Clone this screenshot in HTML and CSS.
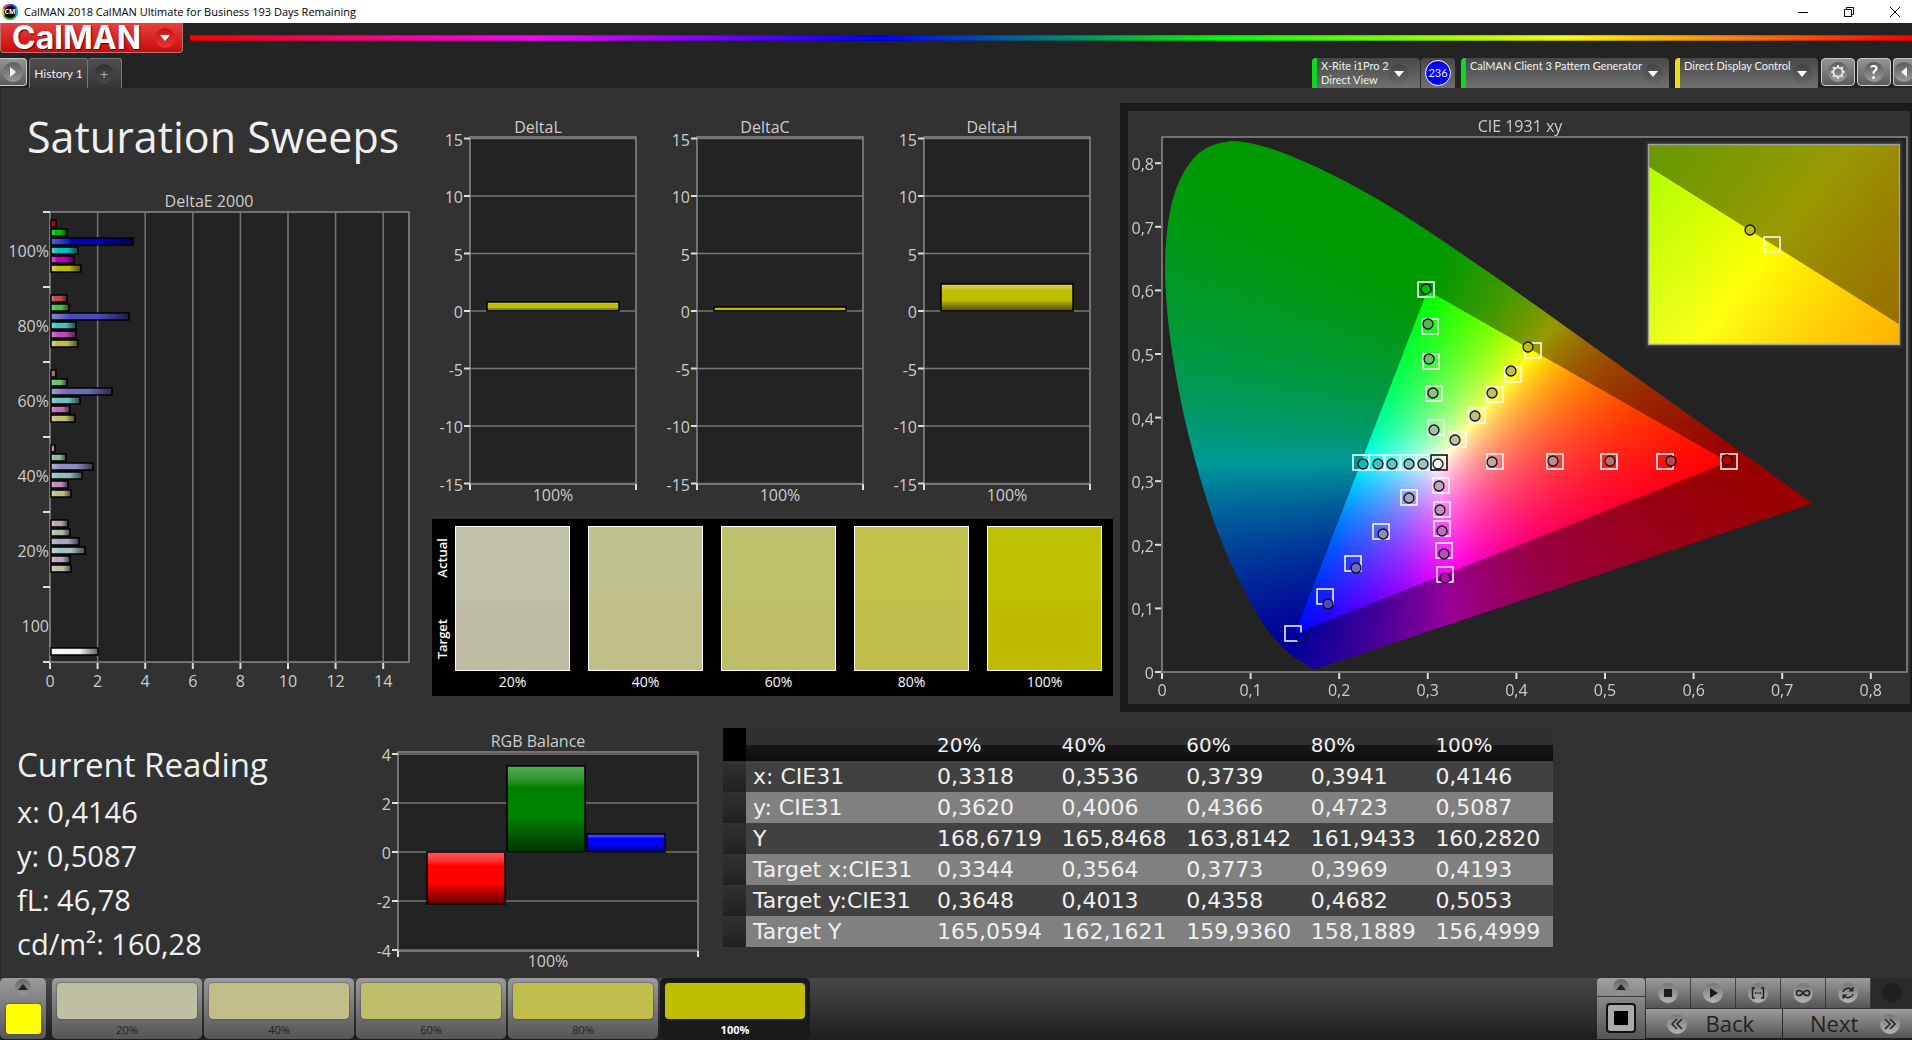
FILE: index.html
```html
<!DOCTYPE html>
<html lang="en">
<head>
<meta charset="utf-8">
<title>CalMAN 2018 CalMAN Ultimate for Business 193 Days Remaining</title>
<link rel="stylesheet" href="styles.css">
</head>
<body>
<header class="titlebar">
  <svg class="app-icon" viewBox="0 0 16 16" aria-hidden="true">
    <circle cx="8" cy="8" r="8" fill="#2a2"/>
    <path d="M8 0a8 8 0 0 1 7 4L8 8z" fill="#1a3cff"/><path d="M15 4a8 8 0 0 1 0 8L8 8z" fill="#20b0e0"/>
    <path d="M1 4a8 8 0 0 1 7-4v8z" fill="#f0208c"/><path d="M1 4a8 8 0 0 0 0 8l7-4z" fill="#e8d020"/>
    <circle cx="8" cy="8" r="6" fill="#000"/>
    <text x="8" y="10" class="app-icon-text">CM</text>
  </svg>
  <span class="titlebar-text">CalMAN 2018 CalMAN Ultimate for Business 193 Days Remaining</span>
  <div class="window-buttons">
    <button class="window-button" aria-label="Minimize"><svg viewBox="0 0 12 12"><path d="M1 6.500h10"/></svg></button>
    <button class="window-button" aria-label="Restore"><svg viewBox="0 0 12 12"><path d="M1.500 3.500h7v7h-7zM3.500 3.500v-2h7v7h-2"/></svg></button>
    <button class="window-button" aria-label="Close"><svg viewBox="0 0 12 12"><path d="M1 1l10 10M11 1L1 11"/></svg></button>
  </div>
</header>

<div class="brand-row">
  <button class="brand"><span>CalMAN</span><span class="knob knob-red"><svg viewBox="0 0 10 6"><path d="M0 0h10L5 6z"/></svg></span></button>
  <div class="spectrum"></div>
</div>

<nav class="toolbar">
  <button class="square-button side-toggle" aria-label="Expand"><span class="knob"><svg viewBox="0 0 6 10"><path d="M0 0v10l6-5z"/></svg></span></button>
  <div class="tabs">
    <button class="tab">History 1</button>
    <button class="tab tab-add" aria-label="Add history"><span class="knob knob-dark">+</span></button>
  </div>
  <div class="devices">
    <div class="device-group">
      <button class="device meter"><span>X-Rite i1Pro 2<br>Direct View</span><span class="knob knob-dark"><svg viewBox="0 0 10 6"><path d="M0 0h10L5 6z"/></svg></span></button>
      <button class="count"><span>236</span></button>
    </div>
    <button class="device source"><span>CalMAN Client 3 Pattern Generator</span><span class="knob knob-dark"><svg viewBox="0 0 10 6"><path d="M0 0h10L5 6z"/></svg></span></button>
    <button class="device display"><span>Direct Display Control</span><span class="knob knob-dark"><svg viewBox="0 0 10 6"><path d="M0 0h10L5 6z"/></svg></span></button>
    <div class="tools">
      <button class="square-button" aria-label="Settings"><span class="knob"><svg class="gear" viewBox="0 0 16 16"><circle cx="8" cy="8" r="4.600"/><path d="M8 1v3M8 12v3M1 8h3M12 8h3M3 3l2 2M11 11l2 2M3 13l2-2M11 5l2-2"/></svg></span></button>
      <button class="square-button" aria-label="Help"><span class="knob help">?</span></button>
      <button class="square-button cut" aria-label="Collapse"><span class="knob"><svg viewBox="0 0 6 10"><path d="M6 0v10L0 5z"/></svg></span></button>
    </div>
  </div>
</nav>

<main class="workspace">
  <div class="upper">
    <section class="sweeps">
      <h1>Saturation Sweeps</h1>
      <svg id="delta-e" class="chart" viewBox="0 0 431 530"></svg>
    </section>
    <section class="deltas">
      <div class="delta-row">
        <svg id="delta-l" class="chart" viewBox="0 0 227 431"></svg>
        <svg id="delta-c" class="chart" viewBox="0 0 227 431"></svg>
        <svg id="delta-h" class="chart" viewBox="0 0 227 431"></svg>
      </div>
      <div class="compare">
        <div class="compare-side"><span>Actual</span><span>Target</span></div>
        <div class="patches">
          <figure><div class="patch s20"></div><figcaption>20%</figcaption></figure>
          <figure><div class="patch s40"></div><figcaption>40%</figcaption></figure>
          <figure><div class="patch s60"></div><figcaption>60%</figcaption></figure>
          <figure><div class="patch s80"></div><figcaption>80%</figcaption></figure>
          <figure><div class="patch s100"></div><figcaption>100%</figcaption></figure>
        </div>
      </div>
    </section>
    <section class="cie">
      <canvas id="cie-canvas" width="782" height="593"></canvas>
      <svg id="cie-axes" viewBox="0 0 782 593"></svg>
    </section>
  </div>

  <div class="lower">
    <section class="reading">
      <h2>Current Reading</h2>
      <p>x: 0,4146</p>
      <p>y: 0,5087</p>
      <p>fL: 46,78</p>
      <p>cd/m²: 160,28</p>
    </section>
    <svg id="rgb" class="chart" viewBox="0 0 353 266"></svg>
    <div class="table-wrap">
      <table>
        <colgroup><col class="col-mark"><col class="col-name"><col><col><col><col><col></colgroup>
        <thead><tr><th class="mark"></th><th></th><th>20%</th><th>40%</th><th>60%</th><th>80%</th><th>100%</th></tr></thead>
        <tbody>
          <tr><td class="mark"></td><td>x: CIE31</td><td>0,3318</td><td>0,3536</td><td>0,3739</td><td>0,3941</td><td>0,4146</td></tr>
          <tr><td class="mark"></td><td>y: CIE31</td><td>0,3620</td><td>0,4006</td><td>0,4366</td><td>0,4723</td><td>0,5087</td></tr>
          <tr><td class="mark"></td><td>Y</td><td>168,6719</td><td>165,8468</td><td>163,8142</td><td>161,9433</td><td>160,2820</td></tr>
          <tr><td class="mark"></td><td>Target x:CIE31</td><td>0,3344</td><td>0,3564</td><td>0,3773</td><td>0,3969</td><td>0,4193</td></tr>
          <tr><td class="mark"></td><td>Target y:CIE31</td><td>0,3648</td><td>0,4013</td><td>0,4358</td><td>0,4682</td><td>0,5053</td></tr>
          <tr><td class="mark"></td><td>Target Y</td><td>165,0594</td><td>162,1621</td><td>159,9360</td><td>158,1889</td><td>156,4999</td></tr>
        </tbody>
      </table>
    </div>
  </div>
</main>

<footer class="bottombar">
  <button class="current-color" aria-label="Current colour"><span class="eject"><svg viewBox="0 0 10 6"><path d="M0 6h10L5 0z"/></svg></span><span class="current-patch"></span></button>
  <div class="steps">
    <button class="step"><span class="step-patch t20"></span>20%</button>
    <button class="step"><span class="step-patch t40"></span>40%</button>
    <button class="step"><span class="step-patch t60"></span>60%</button>
    <button class="step"><span class="step-patch t80"></span>80%</button>
    <button class="step active"><span class="step-patch t100"></span>100%</button>
  </div>
  <div class="transport">
    <div class="pattern">
      <button class="pattern-up" aria-label="Open patterns"><span class="eject"><svg viewBox="0 0 10 6"><path d="M0 6h10L5 0z"/></svg></span></button>
      <button class="pattern-window" aria-label="Pattern window"><span></span></button>
    </div>
    <div class="controls">
      <div class="media">
        <button aria-label="Stop"><span class="dot"><svg viewBox="0 0 16 16"><path d="M4 4h8v8H4z"/></svg></span></button>
        <button aria-label="Play"><span class="dot"><svg viewBox="0 0 16 16"><path d="M5 3l8 5-8 5z"/></svg></span></button>
        <button aria-label="Read series"><span class="dot"><svg class="line" viewBox="0 0 16 16"><path d="M5 3H2.500v10H5M11 3h2.500v10H11M5 8h1.500M7.500 8h1M9.500 8H11"/></svg></span></button>
        <button aria-label="Continuous"><span class="dot"><svg class="line" viewBox="0 0 16 16"><path d="M8 8C6 5 1.500 4.500 1.500 8S6 11 8 8s6.500-3.500 6.500 0S10 11 8 8z"/></svg></span></button>
        <button aria-label="Refresh"><span class="dot"><svg class="line" viewBox="0 0 16 16"><path d="M3 7c.5-3 5-5 8.500-2.500M13 9c-.5 3-5 5-8.500 2.500"/><path class="solid" d="M13.500 1.500v5h-5zM2.500 14.500v-5h5z"/></svg></span></button>
        <button class="blank" aria-label="Status"><span class="dot"></span></button>
      </div>
      <div class="paging">
        <button><span class="dot"><svg class="line" viewBox="0 0 16 16"><path d="M8 3L3 8l5 5M13 3L8 8l5 5"/></svg></span>Back</button>
        <button class="next">Next<span class="dot"><svg class="line" viewBox="0 0 16 16"><path d="M3 3l5 5-5 5M8 3l5 5-5 5"/></svg></span></button>
      </div>
    </div>
  </div>
</footer>
<script src="charts.js"></script>
</body>
</html>
```
FILE: styles.css
```css
* { box-sizing: border-box; }
body {
  margin: 0;
  min-height: 100vh;
  display: flex;
  flex-direction: column;
  background: #323232;
  color: #f0f0f0;
  font-family: "Open Sans", "Noto Sans", sans-serif;
  overflow-x: hidden;
}
button {
  margin: 0;
  padding: 0;
  border: 0;
  background: none;
  color: inherit;
  font: inherit;
}
h1, h2, p, figure { margin: 0; font-weight: 400; }
svg { display: block; }

/* window title */
.titlebar {
  display: flex;
  align-items: center;
  gap: 6px;
  height: 23px;
  padding-left: 2px;
  background: #fff;
  color: #000;
  font-size: 11px;
}
.app-icon { width: 16px; height: 16px; }
.app-icon-text { font-size: 7px; font-weight: 700; fill: #fff; text-anchor: middle; }
.window-buttons { display: flex; margin-left: auto; margin-right: -6px; }
.window-button { width: 46px; height: 21px; display: grid; place-items: center; }
.window-button svg { width: 12px; height: 12px; fill: none; stroke: #000; }

/* brand */
.brand-row {
  display: flex;
  align-items: center;
  gap: 7px;
  height: 30px;
  background: #232323;
}
.brand {
  display: flex;
  align-items: center;
  justify-content: space-between;
  width: 183px;
  height: 30px;
  padding: 0 7px 0 11px;
  border: 1px solid #c07070;
  border-top: 0;
  border-radius: 0 0 4px 4px;
  background: linear-gradient(#e84040, #c80c0c);
  color: #fff;
  font: 700 32px/28px Inter, sans-serif;
  text-shadow: 1px 1px 1px #600;
}
.spectrum {
  flex: 1;
  height: 6px;
  background: linear-gradient(rgba(0,0,0,.25), transparent 30% 70%, rgba(0,0,0,.4)),
    linear-gradient(90deg, #f00, #f0f 20%, #00f 40%, #0f0 60%, #ff0 80%, #f00);
}

/* knobs */
.knob {
  display: grid;
  place-items: center;
  flex: none;
  width: 20px;
  height: 20px;
  border-radius: 50%;
  background: linear-gradient(#5c5c5c, #9a9a9a);
  color: #fff;
}
.knob svg { width: 10px; height: 6px; fill: #fff; }
.knob-red { background: linear-gradient(#c41414, #ec3434); }
.knob-dark { background: linear-gradient(#444, #666); }

/* toolbar */
.toolbar {
  display: flex;
  align-items: flex-start;
  height: 35px;
  padding-top: 5px;
  background: #232323;
  font-family: Lato, "Open Sans", sans-serif;
  font-size: 11px;
  line-height: 14px;
}
.square-button {
  display: grid;
  place-items: center;
  width: 34px;
  height: 28px;
  border: 1px solid #c8c8c8;
  border-radius: 4px;
  background: linear-gradient(#969696, #5c5c5c);
}
.square-button svg { width: 6px; height: 10px; }
.square-button svg.gear { width: 16px; height: 16px; fill: none; stroke: #e0e0e0; stroke-width: 2; }
.side-toggle { width: 27px; border-left: 0; border-radius: 0 4px 4px 0; }
.help { font-size: 18px; font-weight: 700; }
.tabs { display: flex; margin-left: 2px; }
.tab {
  height: 30px;
  width: 59px;
  border: 1px solid #777;
  border-bottom: 0;
  border-radius: 3px 3px 0 0;
  background: linear-gradient(#505050, #343434);
  font-size: 12px;
  white-space: nowrap;
}
.tab-add { width: 34px; border-left: 0; padding-left: 6px; }
.tab-add .knob { background: linear-gradient(#333, #484848); color: #aaa; font-size: 14px; }
.devices { display: flex; gap: 6px; margin-left: auto; }
.device-group { display: flex; }
.device, .count {
  height: 30px;
  background: linear-gradient(#484848, #707070);
  border-radius: 4px 4px 0 0;
}
.device {
  display: flex;
  justify-content: space-between;
  align-items: flex-start;
  padding: 1px 6px 0 4px;
  border-left: 5px solid #10d820;
  text-align: left;
  white-space: nowrap;
}
.device .knob { margin-top: 5px; }
.meter { width: 108px; padding-right: 11px; }
.source { width: 208px; }
.display { width: 143px; border-left-color: #e8e010; }
.count { width: 35px; display: grid; place-items: center; border-left: 1px solid #2b2b2b; }
.count span {
  width: 26px;
  height: 26px;
  border: 1px solid #fff;
  border-radius: 50%;
  background: #00f;
  line-height: 24px;
}
.tools { display: flex; gap: 2px; margin-left: -3px; }
.cut { width: 19px; border-right: 0; border-radius: 4px 0 0 4px; }

/* charts */
.workspace { flex: 1; display: flex; flex-direction: column; border-left: 1px solid #262626; }
.upper { display: grid; grid-template-columns: 431fr 688fr 792fr; }
h1 { padding: 20px 0 0 26px; font-size: 43px; line-height: 58px; height: 94px; white-space: nowrap; }
.chart { width: 100%; }
.chart text, #cie-axes text { font-size: 16px; fill: #ccc; }
.plot { fill: #232323; stroke: #8a8a8a; stroke-width: 1.5px; }
.grid { stroke: #777; stroke-width: 1.5px; }
.tick { stroke: #ddd; stroke-width: 2px; }
.mid { text-anchor: middle; }
.end { text-anchor: end; }
.deltas { padding-right: 7px; }
.delta-row { display: grid; grid-template-columns: repeat(3, 1fr); }
.compare {
  display: grid;
  grid-template-columns: 20px 1fr;
  padding: 7px 11px 3px 3px;
  background: #000;
  color: #fff;
  font-size: 14px;
  line-height: 22px;
}
.compare-side { display: flex; flex-direction: column; justify-content: space-between; height: 145px; padding: 12px 0; }
.compare-side span { writing-mode: vertical-rl; transform: rotate(180deg); line-height: 14px; font-size: 13px; font-weight: 600; }
.patches { display: grid; grid-template-columns: repeat(5, 1fr); gap: 18px; }
.compare figure { text-align: center; }
.patch { height: 145px; border: 1px solid #fff; }
.s20 { background: linear-gradient(#c0c0a8 48%, #bebda4 54%); }
.s40 { background: linear-gradient(#bfc28c 48%, #c0be86 54%); }
.s60 { background: linear-gradient(#bec26c 48%, #bfbd68 54%); }
.s80 { background: linear-gradient(#c0c24c 48%, #bfbe4a 54%); }
.s100 { background: linear-gradient(#bfc200 48%, #bfbc00 54%); }
.cie {
  display: grid;
  align-self: start;
  margin-top: 15px;
  border: 8px solid #1b1b1b;
  border-right-width: 2px;
}
.cie canvas, .cie svg { grid-area: 1 / 1; width: 100%; height: auto; display: block; }

/* readings */
.lower { display: grid; grid-template-columns: 359fr 353fr 1199fr; }
.reading { padding: 30px 0 0 16px; font-size: 29px; line-height: 44px; white-space: nowrap; }
.reading h2 { font-size: 33px; line-height: 46px; padding-bottom: 2px; }
.table-wrap { padding: 16px 0 0 10px; }
table { width: 830px; table-layout: fixed; border-collapse: collapse; font: 22px/30px "DejaVu Sans", sans-serif; }
.col-mark { width: 23px; }
.col-name { width: 184px; }
th, td { height: 31px; padding: 0 0 0 7px; text-align: left; font-weight: 400; white-space: nowrap; }
th { height: 33px; font-size: 20px; background: linear-gradient(#303030 50%, #181818 50%, #0c0c0c); }
tbody tr { background: #414141; }
tbody tr:nth-child(even) { background: #808080; }
.mark { background: linear-gradient(#323232, #202020); }
th.mark { background: #000; }

/* bottom bar */
.bottombar {
  display: flex;
  height: 62px;
  background: linear-gradient(#484848, #1e1e1e);
  color: #222;
}
.current-color, .step, .pattern button, .media button, .paging button {
  background: linear-gradient(#9c9c9c, #555);
}
.current-color {
  display: flex;
  flex-direction: column;
  align-items: center;
  gap: 9px;
  width: 46px;
  height: 61px;
  padding-top: 1px;
  border-radius: 5px;
}
.eject { display: grid; place-items: center; width: 16px; height: 16px; border-radius: 50%; background: linear-gradient(#666, #999); }
.eject svg { width: 10px; height: 6px; fill: #222; }
.current-patch { width: 35px; height: 30px; background: #ff0; border-radius: 3px; box-shadow: 0 0 2px #333; }
.steps { display: flex; gap: 2px; margin-left: 6px; }
.step {
  display: flex;
  flex-direction: column;
  align-items: center;
  gap: 3px;
  width: 150px;
  height: 61px;
  padding-top: 5px;
  border-radius: 5px;
  font-size: 11px;
  line-height: 15px;
}
.step-patch { width: 140px; height: 36px; border-radius: 4px; box-shadow: 0 0 2px #333; }
.t20 { background: #bfbfa4; }
.t40 { background: #bfbe88; }
.t60 { background: #bfbe6a; }
.t80 { background: #bfbe4c; }
.t100 { background: #bfbe00; }
.step.active { background: #1a1a1a; color: #fff; font-weight: 700; }
.transport { display: flex; gap: 1px; margin-left: auto; }
.pattern { display: flex; flex-direction: column; gap: 1px; width: 48px; }
.pattern .pattern-up { display: grid; place-items: center; height: 18px; background: linear-gradient(#a0a0a0, #888); border-radius: 4px 4px 0 0; }
.pattern .pattern-window { display: grid; place-items: center; height: 42px; background: linear-gradient(#888, #555); }
.pattern-window span { width: 30px; height: 30px; border: 2px solid #111; border-radius: 4px; background: linear-gradient(#000, #000) center / 14px 14px no-repeat, #aaa; }
.controls { display: flex; flex-direction: column; gap: 1px; }
.media, .paging { display: flex; gap: 1px; height: 30px; }
.media button { display: grid; place-items: center; width: 44px; height: 30px; }
.media .blank { width: 41px; background: #2a2a2a; }
.blank .dot { background: #202020; }
.dot { display: grid; place-items: center; width: 20px; height: 20px; border-radius: 50%; background: linear-gradient(#777, #b4b4b4); }
.dot svg { width: 16px; height: 16px; fill: #1c1c1c; }
.dot svg.line { fill: none; stroke: #222; stroke-width: 1.5px; }
.dot svg .solid { fill: #222; stroke: none; }
.paging button {
  display: flex;
  align-items: center;
  justify-content: space-between;
  width: 136px;
  height: 29px;
  padding: 0 28px 0 21px;
  font-size: 22px;
  line-height: 29px;
}
.paging .next { width: 129px; padding: 0 12px 0 27px; }
```
FILE: charts.js
```js
const NS = 'http://www.w3.org/2000/svg';

function add(parent, name, attrs, text) {
  const node = document.createElementNS(NS, name);
  for (const key in attrs) node.setAttribute(key, attrs[key]);
  if (text !== undefined) node.textContent = text;
  parent.appendChild(node);
  return node;
}
const line = (svg, cls, x1, y1, x2, y2) => add(svg, 'line', { class: cls, x1, y1, x2, y2 });
const label = (svg, cls, x, y, text) => add(svg, 'text', { class: cls, x, y }, text);

let gradients = 0;
function bar(svg, x, y, w, h, color, vertical) {
  const id = 'bar' + gradients++;
  const g = add(svg, 'linearGradient', vertical ? { id, x1: 0, y1: 0, x2: 0, y2: 1 } : { id });
  add(g, 'stop', { offset: 0, 'stop-color': `color-mix(in srgb, ${color} 65%, white)` });
  add(g, 'stop', { offset: 0.25, 'stop-color': color });
  add(g, 'stop', { offset: 0.6, 'stop-color': color });
  add(g, 'stop', { offset: 1, 'stop-color': `color-mix(in srgb, ${color} 40%, black)` });
  add(svg, 'rect', { x, y, width: w, height: h, fill: `url(#${id})`, stroke: '#000', 'stroke-width': 1.5 });
}

// Tints used for the six hues at each saturation level
const OFF = { 100: 0, 80: 75, 60: 110, 40: 140, 20: 165 };
const HUES = { r: [1, 0, 0], g: [0, 1, 0], b: [0, 0, 1], c: [0, 1, 1], m: [1, 0, 1], y: [1, 1, 0] };
const tint = (hue, level) => `rgb(${HUES[hue].map(v => (v ? 190 : OFF[level])).join(',')})`;

// DeltaE 2000, horizontal bars
(function () {
  const svg = document.getElementById('delta-e');
  label(svg, 'mid', 208, 25, 'DeltaE 2000');
  add(svg, 'rect', { class: 'plot', x: 49, y: 30, width: 359, height: 450 });
  for (let v = 0; v <= 14; v += 2) {
    const x = 49 + v * 23.8;
    if (v) line(svg, 'grid', x, 30, x, 480);
    line(svg, 'tick', x, 481, x, 487);
    label(svg, 'mid', x, 505, v);
  }
  const data = {
    100: [6, 17, 83, 28, 24, 31], 80: [17, 19, 79, 26, 26, 28], 60: [6, 17, 62, 30, 20, 25],
    40: [5, 16, 43, 32, 18, 21], 20: [18, 20, 29, 35, 20, 21]
  };
  [100, 80, 60, 40, 20].forEach((level, i) => {
    const top = 30 + i * 75;
    data[level].forEach((w, k) => bar(svg, 50, top + 8 + k * 9, w - 1, 7, tint('rgbcmy'[k], level)));
    label(svg, 'end', 48, top + 45, level + '%');
  });
  bar(svg, 50, 466, 47, 7, 'rgb(245,245,245)');
  label(svg, 'end', 48, 450, '100');
  for (let i = 0; i <= 6; i++) line(svg, 'tick', 42, 30 + i * 75, 49, 30 + i * 75);
})();

// DeltaL, DeltaC, DeltaH
[['delta-l', 'DeltaL', 9], ['delta-c', 'DeltaC', 4], ['delta-h', 'DeltaH', 27]].forEach(([id, name, h]) => {
  const svg = document.getElementById(id);
  label(svg, 'mid', 106, 45, name);
  add(svg, 'rect', { class: 'plot', x: 38, y: 49, width: 166, height: 347 });
  for (let v = 15; v >= -15; v -= 5) {
    const y = 223 - v * 11.5;
    line(svg, 'grid', 38, y, 204, y);
    line(svg, 'tick', 32, y, 38, y);
    label(svg, 'end', 31, y + 7, v);
  }
  line(svg, 'tick', 38, 396, 38, 402);
  line(svg, 'tick', 204, 396, 204, 402);
  bar(svg, 55, 223 - h, 132, h, 'rgb(190,190,0)', true);
  label(svg, 'mid', 121, 413, '100%');
});

// RGB balance
(function () {
  const svg = document.getElementById('rgb');
  label(svg, 'mid', 178, 35, 'RGB Balance');
  add(svg, 'rect', { class: 'plot', x: 38, y: 40, width: 300, height: 199 });
  for (let v = 4; v >= -4; v -= 2) {
    const y = 140 - v * 24.5;
    line(svg, 'grid', 38, y, 338, y);
    line(svg, 'tick', 32, y, 38, y);
    label(svg, 'end', 31, y + 7, v);
  }
  line(svg, 'tick', 38, 239, 38, 245);
  line(svg, 'tick', 338, 239, 338, 245);
  bar(svg, 67, 140, 78, 52, 'rgb(255,0,0)', true);
  bar(svg, 147, 54, 78, 86, 'rgb(0,130,0)', true);
  bar(svg, 227, 122, 78, 18, 'rgb(0,0,255)', true);
  label(svg, 'mid', 188, 255, '100%');
})();

// CIE 1931 xy chromaticity diagram
(function () {
  const locus = [
    [.1741, .005], [.1738, .0049], [.1733, .0048], [.1726, .0048], [.1714, .0051], [.1689, .0069], [.1644, .0109],
    [.1566, .0177], [.144, .0297], [.1241, .0578], [.1096, .0868], [.0913, .1327], [.0687, .2007], [.0454, .295],
    [.0235, .4127], [.0082, .5384], [.0039, .6548], [.0139, .7502], [.0389, .812], [.0743, .8338], [.1142, .8262],
    [.1547, .8059], [.1929, .7816], [.2296, .7543], [.2658, .7243], [.3016, .6923], [.3373, .6589], [.3731, .6245],
    [.4087, .5896], [.4441, .5547], [.4788, .5202], [.5125, .4866], [.5448, .4544], [.5752, .4242], [.6029, .3965],
    [.627, .3725], [.6482, .3514], [.6658, .334], [.6915, .3083], [.7079, .292], [.723, .277], [.7347, .2653]
  ];
  const gamut = [[.64, .33], [.3, .6], [.15, .06]];
  const ctx = document.getElementById('cie-canvas').getContext('2d');

  // view: pixel rectangle plus the pixel origin and scale of the xy axes
  function paint(view) {
    const { left, top, width, height, ox, oy, sx, sy } = view;
    const px = p => [ox + p[0] * sx, oy - p[1] * sy];
    const buffer = document.createElement('canvas');
    buffer.width = width;
    buffer.height = height;
    const bctx = buffer.getContext('2d');
    const image = bctx.createImageData(width, height);
    for (let j = 0, n = 0; j < height; j++) {
      for (let i = 0; i < width; i++) {
        const x = (left + i - ox) / sx;
        const y = Math.max((oy - top - j) / sy, 0.0001);
        const z = 1 - x - y;
        const rgb = [3.2406 * x - 1.5372 * y - 0.4986 * z, -0.9689 * x + 1.8758 * y + 0.0415 * z,
          0.0557 * x - 0.204 * y + 1.057 * z].map(v => Math.max(v, 0));
        const max = Math.max(...rgb);
        rgb.forEach(v => { image.data[n++] = 255 * v / max; });
        image.data[n++] = 255;
      }
    }
    bctx.putImageData(image, 0, 0);

    ctx.save();
    ctx.beginPath();
    ctx.rect(left, top, width, height);
    ctx.clip();
    const pts = locus.map(px);
    ctx.beginPath();
    ctx.moveTo(...pts[0]);
    for (let i = 0; i < pts.length - 1; i++) {
      const a = pts[i - 1] || pts[i], b = pts[i], c = pts[i + 1], d = pts[i + 2] || c;
      ctx.bezierCurveTo(b[0] + (c[0] - a[0]) / 6, b[1] + (c[1] - a[1]) / 6,
        c[0] - (d[0] - b[0]) / 6, c[1] - (d[1] - b[1]) / 6, c[0], c[1]);
    }
    ctx.closePath();
    ctx.clip();
    ctx.drawImage(buffer, left, top);
    ctx.beginPath();
    ctx.rect(left, top, width, height);
    gamut.map(px).forEach((p, i) => (i ? ctx.lineTo(...p) : ctx.moveTo(...p)));
    ctx.closePath();
    ctx.fillStyle = 'rgba(0,0,0,.4)';
    ctx.fill('evenodd');
    ctx.restore();
  }

  ctx.fillStyle = '#232323';
  ctx.fillRect(34, 26, 745, 535);
  paint({ left: 34, top: 26, width: 745, height: 535, ox: 34, oy: 561, sx: 885, sy: 636 });
  ctx.fillStyle = '#2e2e2e';
  ctx.fillRect(517, 30, 258, 207);
  paint({ left: 520, top: 33, width: 252, height: 201, ox: 644 - .4193 * 4680, oy: 133 + .5053 * 3706, sx: 4680, sy: 3706 });

  const svg = document.getElementById('cie-axes');
  label(svg, 'mid', 392, 21, 'CIE 1931 xy');
  add(svg, 'rect', { x: 34, y: 26, width: 745, height: 535, fill: 'none', stroke: '#8a8a8a', 'stroke-width': 1.5 });
  add(svg, 'rect', { x: 520.5, y: 33.5, width: 251, height: 200, fill: 'none', stroke: '#a0a0a0', 'stroke-width': 1.5 });
  for (let i = 0; i <= 8; i++) {
    const text = i ? '0,' + i : '0';
    const x = 34 + i * 88.6, y = 561 - i * 63.6;
    line(svg, 'tick', x, 562, x, 568);
    line(svg, 'tick', 27, y, 33, y);
    label(svg, 'mid', x, 585, text);
    label(svg, 'end', 26, y + 7, text);
  }

  const dx = 1128, dy = 111;
  const square = (x, y, stroke) => add(svg, 'rect',
    { x: x - dx - 8, y: y - dy - 7, width: 16, height: 15, fill: 'none', stroke, 'stroke-width': 1.5 });
  const circle = (x, y, fill) => add(svg, 'circle',
    { cx: x - dx, cy: y - dy, r: 5, fill, stroke: '#111', 'stroke-width': 1.3 });
  const targets = [
    [1426, 289], [1430, 326], [1431, 361], [1434, 393], [1436, 427], [1458, 439], [1477, 415], [1495, 394], [1513, 374],
    [1533, 350], [1361, 462], [1377, 462], [1392, 462], [1409, 462], [1424, 462], [1495, 461], [1555, 461], [1609, 461],
    [1665, 461], [1729, 461], [1441, 485], [1442, 509], [1442, 528], [1444, 550], [1445, 574], [1409, 497], [1381, 531],
    [1353, 563], [1325, 596], [1293, 633], [1772, 244]
  ];
  targets.forEach(p => square(p[0], p[1], '#fff'));
  square(1439, 462, '#000');
  const levels = [20, 40, 60, 80, 100];
  const measured = {
    g: [[1434, 430], [1433, 393], [1429, 359], [1428, 324], [1426, 289]],
    y: [[1455, 440], [1475, 416], [1492, 393], [1511, 371], [1528, 347]],
    c: [[1423, 464], [1409, 464], [1392, 464], [1378, 464], [1363, 464]],
    r: [[1492, 462], [1553, 461], [1610, 461], [1671, 461], [1727, 460]],
    m: [[1439, 486], [1440, 510], [1442, 531], [1444, 554], [1445, 578]],
    b: [[1409, 498], [1383, 534], [1356, 568], [1328, 604], [1302, 638]]
  };
  for (const hue in measured) measured[hue].forEach((p, i) => circle(p[0], p[1], tint(hue, levels[i])));
  circle(1438, 464, '#fff');
  circle(1750, 230, tint('y', 100));
})();
```
